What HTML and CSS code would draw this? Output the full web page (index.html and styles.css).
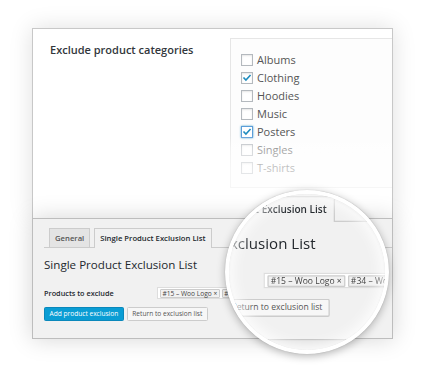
FILE: index.html
```html
<!DOCTYPE html>
<html lang="en">
<head>
<meta charset="utf-8">
<title>Exclusion settings</title>
<link rel="stylesheet" href="styles.css">
</head>
<body>
<div class="stage">
  <section class="card">
    <div class="card-label">Exclude product categories</div>
    <ul class="cat-list">
      <li class="cat"><span class="cb"></span>Albums</li>
      <li class="cat"><span class="cb"><svg class="tick" viewBox="0 0 12 12"><path d="M2.4 6.1 L4.7 8.5 L9.6 3.2"/></svg></span>Clothing</li>
      <li class="cat"><span class="cb"></span>Hoodies</li>
      <li class="cat"><span class="cb"></span>Music</li>
      <li class="cat"><span class="cb cb-focus"><svg class="tick" viewBox="0 0 12 12"><path d="M2.4 6.1 L4.7 8.5 L9.6 3.2"/></svg></span>Posters</li>
      <li class="cat"><span class="cb"></span>Singles</li>
      <li class="cat"><span class="cb"></span>T-shirts</li>
    </ul>
  </section>

  <section class="panel">
    <nav class="tabs">
      <span class="tab">General</span>
      <span class="tab tab-active">Single Product Exclusion List</span>
    </nav>
    <h2 class="heading">Single Product Exclusion List</h2>
    <div class="field">
      <span class="field-label">Products to exclude</span>
      <div class="input">
        <span class="chip">#15 – Woo Logo ×</span>
        <span class="chip">#34 – Woo Ninja ×</span>
      </div>
    </div>
    <div class="actions">
      <span class="btn btn-primary">Add product exclusion</span>
      <span class="btn">Return to exclusion list</span>
    </div>
  </section>

  <div class="lens" aria-hidden="true">
    <div class="lens-view">
      <section class="panel">
        <nav class="tabs">
          <span class="tab">General</span>
          <span class="tab tab-active">Single Product Exclusion List</span>
        </nav>
        <h2 class="heading">Single Product Exclusion List</h2>
        <div class="field">
          <span class="field-label">Products to exclude</span>
          <div class="input">
            <span class="chip">#15 – Woo Logo ×</span>
            <span class="chip">#34 – Woo Ninja ×</span>
          </div>
        </div>
        <div class="actions">
          <span class="btn btn-primary">Add product exclusion</span>
          <span class="btn">Return to exclusion list</span>
        </div>
      </section>
    </div>
  </div>
</div>
</body>
</html>
```
FILE: styles.css
```css
html, body {
  margin: 0;
  padding: 0;
  background: #fff;
}

.stage {
  position: relative;
  width: 421px;
  height: 368px;
  box-sizing: border-box;
  padding: 28px 0 0 32px;
  overflow: hidden;
  font-family: "Open Sans", "Noto Sans", sans-serif;
}

/* ---------- top card ---------- */
.card {
  position: relative;
  width: 361px;
  height: 190px;
  box-sizing: border-box;
  display: flex;
  padding: 9px 0 0 17px;
  background: #fff;
  border: 1px solid #c8c8c8;
  border-bottom: 0;
  box-shadow: 0 0 22px rgba(0, 0, 0, 0.13);
}

.card::after {
  content: "";
  position: absolute;
  left: 0;
  right: 0;
  top: 0;
  bottom: 0;
  pointer-events: none;
  background: linear-gradient(to bottom,
    rgba(255, 255, 255, 0) 106px,
    rgba(255, 255, 255, 0.45) 120px,
    rgba(255, 255, 255, 0.65) 140px,
    rgba(255, 255, 255, 0.6) 100%);
}

.card-label {
  width: 180px;
  margin-top: 3.5px;
  font-size: 11px;
  line-height: 15px;
  font-weight: 600;
  color: #32373c;
}

.cat-list {
  flex: 1;
  height: 150px;
  box-sizing: border-box;
  margin: 0;
  padding: 12px 0 0 10px;
  list-style: none;
  background: #fdfdfd;
  border: 1px solid #e6e6e6;
  border-right: 0;
}

.cat {
  display: flex;
  align-items: center;
  height: 18px;
  font-size: 11px;
  line-height: 18px;
  color: #555;
}

.cb {
  width: 12px;
  height: 12px;
  box-sizing: border-box;
  margin-right: 4px;
  border: 1px solid #b4b9be;
  background: #fff;
  box-shadow: inset 0 1px 2px rgba(0, 0, 0, 0.1);
  display: flex;
}

.cb-focus {
  border-color: #5b9dd9;
  box-shadow: 0 0 2px rgba(30, 140, 190, 0.8);
}

.tick {
  width: 10px;
  height: 10px;
}

.tick path {
  fill: none;
  stroke: #1e8cbe;
  stroke-width: 1.9;
  stroke-linecap: square;
}

/* ---------- settings panel ---------- */
.panel {
  position: relative;
  width: 361px;
  height: 121px;
  box-sizing: border-box;
  padding: 9px 0 0 11px;
  background: #f1f1f1;
  border: 1px solid #bdbdbd;
  box-shadow: 0 0 22px rgba(0, 0, 0, 0.17);
}

.tabs {
  display: flex;
  align-items: flex-end;
  gap: 4px;
  height: 20px;
  box-sizing: border-box;
  padding-left: 5px;
  border-bottom: 1px solid #ccc;
}

.tab {
  height: 19px;
  box-sizing: border-box;
  padding: 0 5px;
  border: 1px solid #ccc;
  border-bottom: 0;
  background: #e4e4e4;
  color: #555;
  font-size: 7.7px;
  line-height: 18px;
  font-weight: 600;
  white-space: nowrap;
}

.tab-active {
  height: 20px;
  margin-bottom: -1px;
  background: #f1f1f1;
  color: #23282d;
}

.heading {
  margin: 8.5px 0 0;
  font-size: 11.6px;
  line-height: 16px;
  font-weight: 400;
  color: #23282d;
}

.field {
  display: flex;
  align-items: center;
  height: 12px;
  margin-top: 14.5px;
}

.field-label {
  width: 113px;
  flex: none;
  font-size: 7.3px;
  line-height: 10px;
  font-weight: 600;
  color: #23282d;
}

.input {
  flex: 1;
  margin-right: 13px;
  height: 12px;
  box-sizing: border-box;
  display: flex;
  align-items: center;
  gap: 2px;
  padding: 0 2px;
  background: #fff;
  border: 1px solid #ddd;
  overflow: hidden;
}

.chip {
  height: 9px;
  box-sizing: border-box;
  padding: 0 1.5px;
  border: 1px solid #ccc;
  border-radius: 1px;
  background: #f1f1f1;
  color: #444;
  font-size: 6.6px;
  line-height: 7px;
  white-space: nowrap;
}

.actions {
  display: flex;
  gap: 3px;
  margin-top: 8px;
}

.btn {
  height: 14px;
  box-sizing: border-box;
  padding: 0 4.5px;
  border: 1px solid #ccc;
  border-radius: 1.5px;
  background: #f7f7f7;
  color: #555;
  font-size: 6.6px;
  line-height: 12px;
  white-space: nowrap;
}

.btn-primary {
  background: #0a9dd4;
  border-color: #0a88bb;
  color: #fff;
}

/* ---------- magnifier ---------- */
.lens {
  position: absolute;
  left: 225px;
  top: 190px;
  width: 164px;
  height: 164px;
  box-sizing: border-box;
  border: 4px solid #fff;
  border-radius: 50%;
  overflow: hidden;
  background: #f6f6f6;
  box-shadow: 0 2px 9px rgba(0, 0, 0, 0.28), 0 0 1px rgba(0, 0, 0, 0.25);
}

.lens::after {
  content: "";
  position: absolute;
  left: 0;
  right: 0;
  top: 0;
  bottom: 0;
  border-radius: 50%;
  box-shadow: inset 0 0 14px 4px rgba(255, 255, 255, 0.85), inset 0 1px 3px rgba(0, 0, 0, 0.12);
}

.lens-view {
  position: absolute;
  left: -128.4px;
  top: -11.2px;
  transform: scale(1.3);
  transform-origin: 0 0;
}
```
